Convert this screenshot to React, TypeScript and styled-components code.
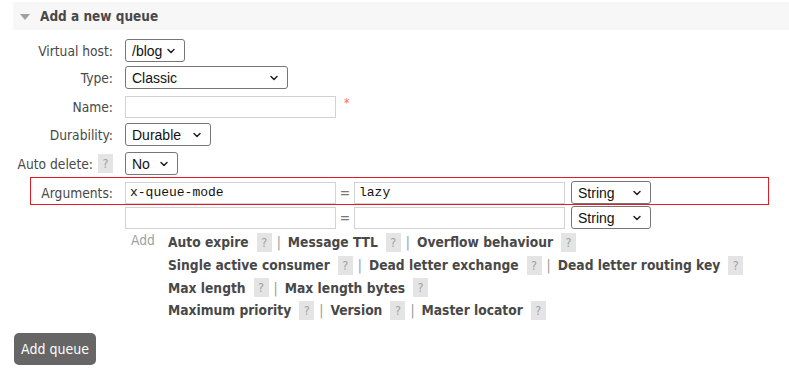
import React from "react";
import styled, { createGlobalStyle } from "styled-components";
import { ChevronDown } from "lucide-react";

const GlobalStyle = createGlobalStyle`
  body {
    margin: 0;
    background: #ffffff;
    font-family: "DejaVu Sans Condensed", "DejaVu Sans", sans-serif;
    font-size: 13.7px;
    color: #484848;
  }
`;

const Page = styled.div`
  width: 789px;
  height: 373px;
  padding-top: 2px;
  box-sizing: border-box;
  overflow: hidden;
`;

const SectionHeader = styled.div`
  margin-left: 13px;
  height: 28px;
  background: #f7f7f7;
  display: flex;
  align-items: center;
  gap: 10px;
  padding-left: 7px;
  font-weight: bold;
  font-size: 13.5px;
  color: #484848;
`;

const Triangle = styled.span`
  width: 0;
  height: 0;
  border-left: 5px solid transparent;
  border-right: 5px solid transparent;
  border-top: 6px solid #a0a0a0;
  margin-top: 1px;
`;

const Form = styled.div`
  display: flex;
  flex-direction: column;
  padding-top: 9px;
`;

const Row = styled.div<{ $top: number }>`
  position: relative;
  display: flex;
  align-items: center;
  margin-top: ${(p) => p.$top}px;
`;

const Label = styled.div`
  width: 113px;
  flex: none;
  margin-right: 12px;
  display: flex;
  justify-content: flex-end;
  align-items: center;
  gap: 5px;
  white-space: nowrap;
`;

const Help = styled.span`
  display: inline-flex;
  align-items: center;
  justify-content: center;
  width: 15px;
  height: 19px;
  background: #e4e4e4;
  color: #a0a0a0;
  font-weight: normal;
  font-size: 12.5px;
`;

const SelectWrap = styled.span<{ $w: number }>`
  position: relative;
  display: inline-block;
  width: ${(p) => p.$w}px;
  height: 23px;
  flex: none;
`;

const Select = styled.select`
  appearance: none;
  width: 100%;
  height: 100%;
  margin: 0;
  padding: 0 0 0 6px;
  border: 1px solid #767676;
  border-radius: 3px;
  background: #ffffff;
  font-family: "Liberation Sans", Arial, sans-serif;
  font-size: 14px;
  color: #111;
`;

const Chevron = styled(ChevronDown)`
  position: absolute;
  right: 8px;
  top: 6px;
  pointer-events: none;
  color: #222;
`;

const Input = styled.input<{ $w: number }>`
  width: ${(p) => p.$w}px;
  height: 22px;
  box-sizing: border-box;
  margin: 0;
  padding: 0 4px;
  border: 1px solid #d2d2d2;
  font-family: "Liberation Mono", "Courier New", monospace;
  font-size: 13px;
  color: #111;
  flex: none;
`;

const Required = styled.span`
  color: #ff6666;
  font-size: 12px;
  margin-left: 8px;
  align-self: flex-start;
`;

const Equals = styled.span`
  width: 18px;
  text-align: center;
  color: #777;
  flex: none;
`;

const Gap = styled.span`
  width: 6px;
  flex: none;
`;

const Highlight = styled.div`
  position: absolute;
  left: 30px;
  top: -4px;
  width: 739px;
  height: 28px;
  border: 1.5px solid #e31b23;
  box-sizing: border-box;
  pointer-events: none;
`;

const AddRow = styled.div`
  display: flex;
  margin-top: 2px;
  margin-left: 131px;
`;

const AddLabel = styled.span`
  color: #a0a0a0;
  width: 37px;
  flex: none;
  line-height: 23px;
  margin-top: -2px;
`;

const Links = styled.div`
  display: flex;
  flex-direction: column;
`;

const LinkLine = styled.div`
  display: flex;
  align-items: center;
  height: 22.7px;
`;

const ArgLink = styled.span`
  font-weight: bold;
  color: #484848;
  margin-right: 8px;
`;

const Sep = styled.span`
  color: #9a9a9a;
  margin: 0 7px 0 5px;
`;

const Button = styled.button`
  margin: 11px 0 0 14px;
  width: 82px;
  height: 32px;
  background: #666666;
  color: #ffffff;
  border: none;
  border-radius: 5px;
  font-family: "DejaVu Sans Condensed", "DejaVu Sans", sans-serif;
  font-size: 14px;
  padding: 0;
  align-self: flex-start;
`;

const Drop = ({ w, value }: { w: number; value: string }) => (
  <SelectWrap $w={w}>
    <Select defaultValue={value}>
      <option>{value}</option>
    </Select>
    <Chevron size={12} strokeWidth={3} />
  </SelectWrap>
);

const lines: string[][] = [
  ["Auto expire", "Message TTL", "Overflow behaviour"],
  ["Single active consumer", "Dead letter exchange", "Dead letter routing key"],
  ["Max length", "Max length bytes"],
  ["Maximum priority", "Version", "Master locator"],
];

export default function App() {
  return (
    <Page>
      <GlobalStyle />
      <SectionHeader>
        <Triangle />
        Add a new queue
      </SectionHeader>
      <Form>
        <Row $top={0}>
          <Label>Virtual host:</Label>
          <Drop w={60} value="/blog" />
        </Row>
        <Row $top={4}>
          <Label>Type:</Label>
          <Drop w={163} value="Classic" />
        </Row>
        <Row $top={7}>
          <Label>Name:</Label>
          <Input $w={211} />
          <Required>*</Required>
        </Row>
        <Row $top={5}>
          <Label>Durability:</Label>
          <Drop w={86} value="Durable" />
        </Row>
        <Row $top={6}>
          <Label>
            Auto delete: <Help>?</Help>
          </Label>
          <Drop w={53} value="No" />
        </Row>
        <Row $top={6}>
          <Label>Arguments:</Label>
          <Input $w={211} defaultValue="x-queue-mode" />
          <Equals>=</Equals>
          <Input $w={211} defaultValue="lazy" />
          <Gap />
          <Drop w={80} value="String" />
          <Highlight />
        </Row>
        <Row $top={2}>
          <Label />
          <Input $w={211} />
          <Equals>=</Equals>
          <Input $w={211} />
          <Gap />
          <Drop w={80} value="String" />
        </Row>
        <AddRow>
          <AddLabel>Add</AddLabel>
          <Links>
            {lines.map((line, i) => (
              <LinkLine key={i}>
                {line.map((name, j) => (
                  <React.Fragment key={name}>
                    {j > 0 && <Sep>|</Sep>}
                    <ArgLink>{name}</ArgLink>
                    <Help>?</Help>
                  </React.Fragment>
                ))}
              </LinkLine>
            ))}
          </Links>
        </AddRow>
        <Button>Add queue</Button>
      </Form>
    </Page>
  );
}
